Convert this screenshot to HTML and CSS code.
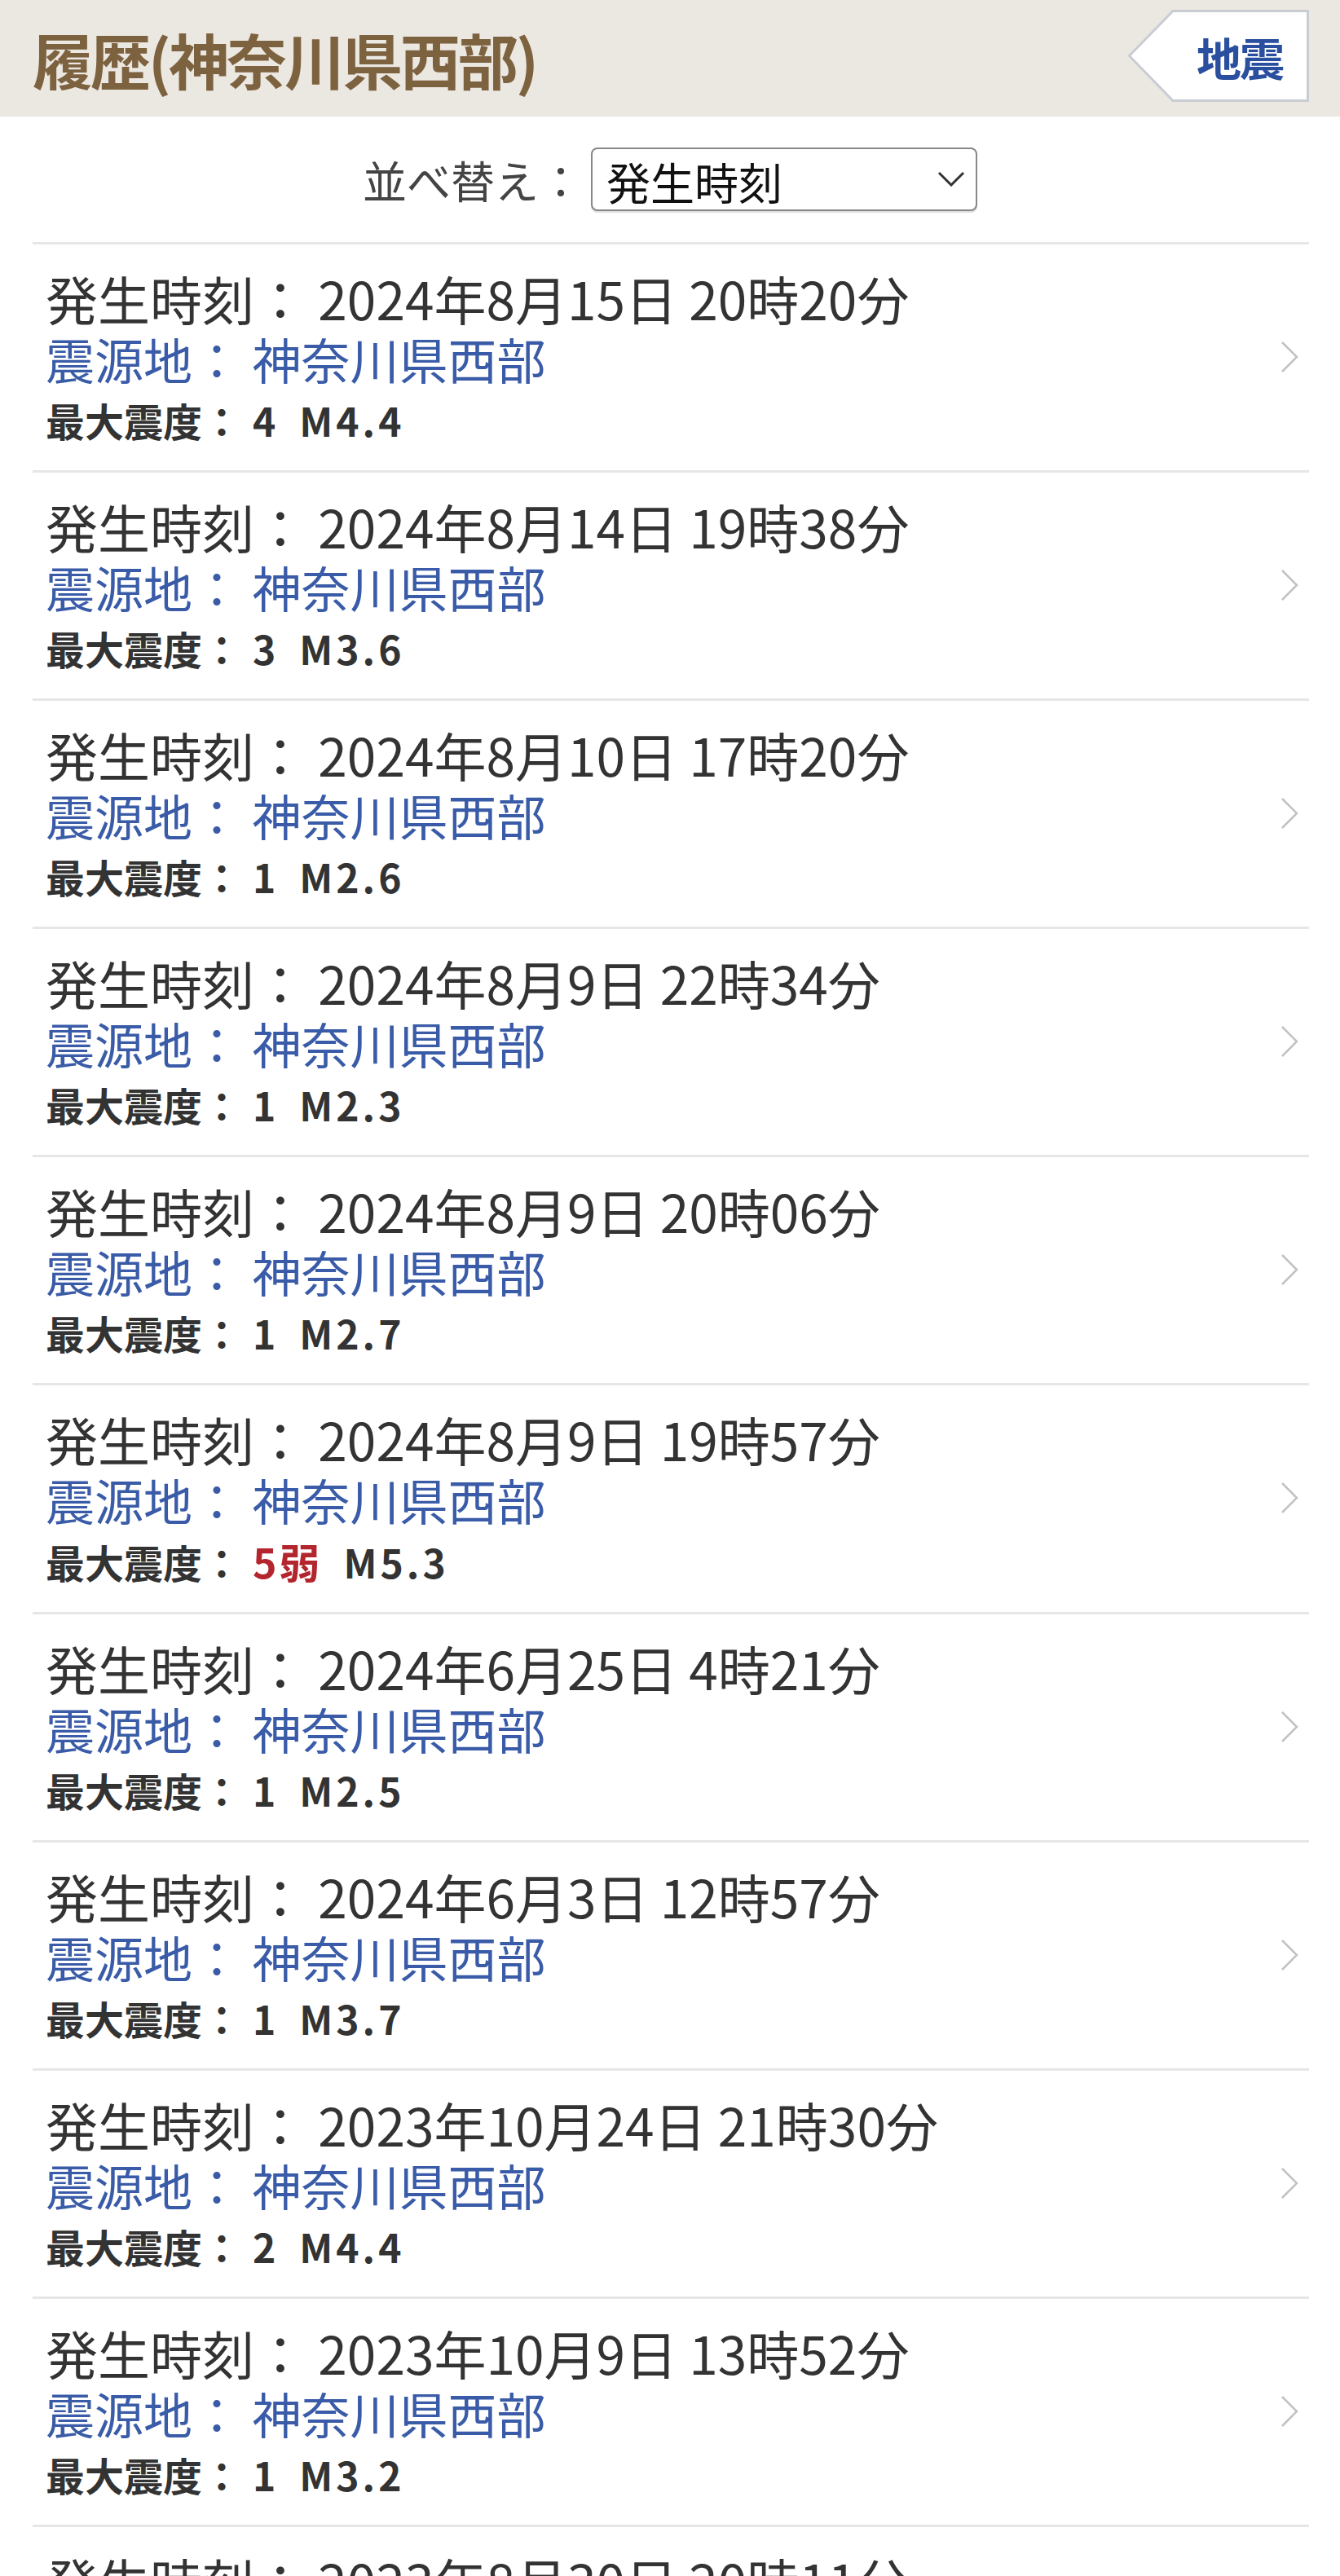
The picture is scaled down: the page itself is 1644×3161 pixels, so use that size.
FILE: index.html
```html
<!DOCTYPE html>
<html lang="ja">
<head>
  <meta charset="UTF-8" />
  <title>履歴(神奈川県西部)</title>
  <meta name="viewport" content="width=device-width, initial-scale=1.0"/>
  <link rel="stylesheet" href="styles.css">
</head>
<body>

  <header class="top-bar">
    <h1 class="page-title">履歴(神奈川県西部)</h1>
    <a class="back-tag" href="#">
      <svg class="back-shape" viewBox="0 0 222 113" preserveAspectRatio="none">
        <polygon points="55,1.5 220.5,1.5 220.5,111.5 55,111.5 1.5,56.5" fill="#fff" stroke="#c9ccd3" stroke-width="3"/>
      </svg>
      <span class="back-label">地震</span>
    </a>
  </header>

  <div class="sort-row">
    <label for="sort">並べ替え：</label>
    <div class="select-wrap">
      <select id="sort" name="sort">
        <option>発生時刻</option>
        <option>最大震度</option>
        <option>マグニチュード</option>
      </select>
      <svg class="select-arrow" viewBox="0 0 34 19">
        <polyline points="2,2 17,17 32,2" fill="none" stroke="#333" stroke-width="3"/>
      </svg>
    </div>
  </div>

  <ul class="quake-list">
    <li class="quake">
      <div class="quake-body">
        <p class="time">発生時刻： 2024年8月15日 20時20分</p>
        <p class="area">震源地： 神奈川県西部</p>
        <p class="scale">最大震度：<span class="val">4</span><span class="mag">M4.4</span></p>
      </div>
      <svg class="chevron" viewBox="0 0 22 40"><polyline points="2,2 20,20 2,38"/></svg>
    </li>
    <li class="quake">
      <div class="quake-body">
        <p class="time">発生時刻： 2024年8月14日 19時38分</p>
        <p class="area">震源地： 神奈川県西部</p>
        <p class="scale">最大震度：<span class="val">3</span><span class="mag">M3.6</span></p>
      </div>
      <svg class="chevron" viewBox="0 0 22 40"><polyline points="2,2 20,20 2,38"/></svg>
    </li>
    <li class="quake">
      <div class="quake-body">
        <p class="time">発生時刻： 2024年8月10日 17時20分</p>
        <p class="area">震源地： 神奈川県西部</p>
        <p class="scale">最大震度：<span class="val">1</span><span class="mag">M2.6</span></p>
      </div>
      <svg class="chevron" viewBox="0 0 22 40"><polyline points="2,2 20,20 2,38"/></svg>
    </li>
    <li class="quake">
      <div class="quake-body">
        <p class="time">発生時刻： 2024年8月9日 22時34分</p>
        <p class="area">震源地： 神奈川県西部</p>
        <p class="scale">最大震度：<span class="val">1</span><span class="mag">M2.3</span></p>
      </div>
      <svg class="chevron" viewBox="0 0 22 40"><polyline points="2,2 20,20 2,38"/></svg>
    </li>
    <li class="quake">
      <div class="quake-body">
        <p class="time">発生時刻： 2024年8月9日 20時06分</p>
        <p class="area">震源地： 神奈川県西部</p>
        <p class="scale">最大震度：<span class="val">1</span><span class="mag">M2.7</span></p>
      </div>
      <svg class="chevron" viewBox="0 0 22 40"><polyline points="2,2 20,20 2,38"/></svg>
    </li>
    <li class="quake">
      <div class="quake-body">
        <p class="time">発生時刻： 2024年8月9日 19時57分</p>
        <p class="area">震源地： 神奈川県西部</p>
        <p class="scale">最大震度：<span class="val strong">5弱</span><span class="mag">M5.3</span></p>
      </div>
      <svg class="chevron" viewBox="0 0 22 40"><polyline points="2,2 20,20 2,38"/></svg>
    </li>
    <li class="quake">
      <div class="quake-body">
        <p class="time">発生時刻： 2024年6月25日 4時21分</p>
        <p class="area">震源地： 神奈川県西部</p>
        <p class="scale">最大震度：<span class="val">1</span><span class="mag">M2.5</span></p>
      </div>
      <svg class="chevron" viewBox="0 0 22 40"><polyline points="2,2 20,20 2,38"/></svg>
    </li>
    <li class="quake">
      <div class="quake-body">
        <p class="time">発生時刻： 2024年6月3日 12時57分</p>
        <p class="area">震源地： 神奈川県西部</p>
        <p class="scale">最大震度：<span class="val">1</span><span class="mag">M3.7</span></p>
      </div>
      <svg class="chevron" viewBox="0 0 22 40"><polyline points="2,2 20,20 2,38"/></svg>
    </li>
    <li class="quake">
      <div class="quake-body">
        <p class="time">発生時刻： 2023年10月24日 21時30分</p>
        <p class="area">震源地： 神奈川県西部</p>
        <p class="scale">最大震度：<span class="val">2</span><span class="mag">M4.4</span></p>
      </div>
      <svg class="chevron" viewBox="0 0 22 40"><polyline points="2,2 20,20 2,38"/></svg>
    </li>
    <li class="quake">
      <div class="quake-body">
        <p class="time">発生時刻： 2023年10月9日 13時52分</p>
        <p class="area">震源地： 神奈川県西部</p>
        <p class="scale">最大震度：<span class="val">1</span><span class="mag">M3.2</span></p>
      </div>
      <svg class="chevron" viewBox="0 0 22 40"><polyline points="2,2 20,20 2,38"/></svg>
    </li>
    <li class="quake">
      <div class="quake-body">
        <p class="time">発生時刻： 2023年8月30日 20時11分</p>
        <p class="area">震源地： 神奈川県西部</p>
        <p class="scale">最大震度：<span class="val">1</span><span class="mag">M2.9</span></p>
      </div>
      <svg class="chevron" viewBox="0 0 22 40"><polyline points="2,2 20,20 2,38"/></svg>
    </li>
  </ul>

</body>
</html>
```

FILE: styles.css
```css
body {
  margin: 0;
  font-family: "Noto Sans CJK JP", "Noto Sans", sans-serif;
  background-color: #fff;
  color: #333;
}

.top-bar {
  display: flex;
  justify-content: space-between;
  align-items: flex-start;
  height: 143px;
  padding: 0 38px 0 40px;
  background-color: #ebe7e1;
}

.page-title {
  margin: 0;
  margin-top: 27px;
  font-size: 74px;
  line-height: 90px;
  font-weight: bold;
  color: #7d6240;
  letter-spacing: -3px;
}

.back-tag {
  position: relative;
  display: flex;
  align-items: center;
  justify-content: flex-end;
  width: 222px;
  height: 113px;
  margin-top: 12px;
  text-decoration: none;
}

.back-shape {
  position: absolute;
  top: 0;
  left: 0;
  width: 100%;
  height: 100%;
}

.back-label {
  position: relative;
  margin-right: 32px;
  font-size: 55px;
  font-weight: bold;
  color: #2b4f9f;
  letter-spacing: -2px;
}

.sort-row {
  display: flex;
  justify-content: center;
  align-items: center;
  gap: 10px;
  height: 154px;
  font-size: 54px;
  color: #444;
}

.select-wrap {
  position: relative;
  width: 474px;
  height: 78px;
}

.select-wrap select {
  appearance: none;
  width: 100%;
  height: 100%;
  padding: 0 0 0 17px;
  font-family: inherit;
  font-size: 54px;
  color: #111;
  background-color: #fff;
  border: 2px solid #888;
  border-radius: 8px;
  box-shadow: 0 2px 1px #ddd;
}

.select-arrow {
  position: absolute;
  right: 15px;
  top: 29px;
  width: 34px;
  height: 19px;
}

.quake-list {
  list-style: none;
  margin: 0 38px 0 40px;
  padding: 0;
}

.quake {
  display: flex;
  align-items: center;
  justify-content: space-between;
  border-top: 3px solid #e6e6e6;
  padding: 30px 13px 32px 16px;
}

.quake p {
  margin: 0;
}

.time {
  font-size: 64px;
  line-height: 71px;
  color: #333;
}

.area {
  margin-top: 3px !important;
  font-size: 60px;
  line-height: 71px;
  color: #3a5ca8;
}

.scale {
  margin-top: 10px !important;
  font-size: 48px;
  line-height: 60px;
  font-weight: bold;
  color: #333;
}

.val {
  margin-left: 14px;
  letter-spacing: 3px;
}

.strong {
  font-size: 50px;
  color: #b3262e;
}

.mag {
  margin-left: 26px;
  letter-spacing: 4px;
}

.chevron {
  width: 22px;
  height: 40px;
  fill: none;
  stroke: #c2c2c2;
  stroke-width: 2.5;
}
```
